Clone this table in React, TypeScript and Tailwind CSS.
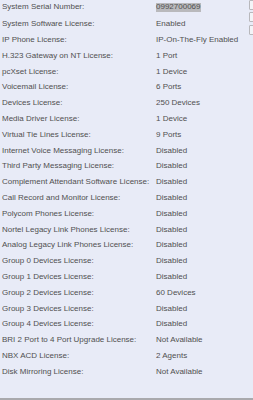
import React from 'react';

const licenses: [string, string][] = [
  ['System Software License:', 'Enabled'],
  ['IP Phone License:', 'IP-On-The-Fly Enabled'],
  ['H.323 Gateway on NT License:', '1 Port'],
  ['pcXset License:', '1 Device'],
  ['Voicemail License:', '6 Ports'],
  ['Devices License:', '250 Devices'],
  ['Media Driver License:', '1 Device'],
  ['Virtual Tie Lines License:', '9 Ports'],
  ['Internet Voice Messaging License:', 'Disabled'],
  ['Third Party Messaging License:', 'Disabled'],
  ['Complement Attendant Software License:', 'Disabled'],
  ['Call Record and Monitor License:', 'Disabled'],
  ['Polycom Phones License:', 'Disabled'],
  ['Nortel Legacy Link Phones License:', 'Disabled'],
  ['Analog Legacy Link Phones License:', 'Disabled'],
  ['Group 0 Devices License:', 'Disabled'],
  ['Group 1 Devices License:', 'Disabled'],
  ['Group 2 Devices License:', '60 Devices'],
  ['Group 3 Devices License:', 'Disabled'],
  ['Group 4 Devices License:', 'Disabled'],
  ['BRI 2 Port to 4 Port Upgrade License:', 'Not Available'],
  ['NBX ACD License:', '2 Agents'],
  ['Disk Mirroring License:', 'Not Available'],
];

export default function App() {
  return (
    <div
      className="h-[400px] w-[253px] overflow-hidden bg-[#e8ebf7] border-b-2 border-[#a9a9ad] flex text-[#505050] text-[8px]"
      style={{ fontFamily: '"Liberation Sans", Arial, sans-serif' }}
    >
      <div className="w-[249px] shrink-0 flex flex-col pl-[2px]">
        <div className="flex items-center h-[14.6px] mb-[1.8px]">
          <span className="w-[154px] shrink-0">System Serial Number:</span>
          <span className="bg-[#b9b9bc] text-[#505050] leading-[8.4px]">0992700069</span>
        </div>
        {licenses.map(([label, value]) => (
          <div key={label} className="flex items-center h-[15.8px]">
            <span className="w-[154px] shrink-0 whitespace-nowrap">{label}</span>
            <span className="whitespace-nowrap">{value}</span>
          </div>
        ))}
      </div>
      <div className="flex flex-col pt-0">
        <div className="w-[20px] h-[10px] bg-[#f3f4f8] border border-[#b8b8bc] rounded-[1px]" />
        <div className="w-[20px] h-[10px] mt-[2px] bg-[#f3f4f8] border border-[#b8b8bc] rounded-[1px]" />
        <div className="w-[20px] h-[10px] mt-[3px] bg-[#f3f4f8] border border-[#b8b8bc] rounded-[1px]" />
      </div>
    </div>
  );
}
